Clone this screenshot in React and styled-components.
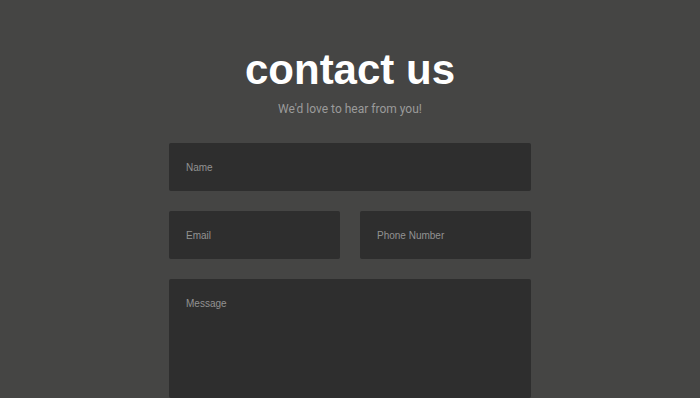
import React from "react";
import styled, { createGlobalStyle } from "styled-components";

const Global = createGlobalStyle`
  html, body { margin: 0; padding: 0; background: #454544; overflow: hidden; }
  * { box-sizing: border-box; }
`;

const Page = styled.main`
  height: 398px;
  display: flex;
  flex-direction: column;
  align-items: center;
  padding-top: 46px;
`;

const Title = styled.h1`
  margin: 0;
  font-family: "Liberation Sans", Arial, sans-serif;
  font-weight: 700;
  font-size: 42px;
  line-height: 48px;
  color: #ffffff;
`;

const Subtitle = styled.p`
  margin: 7px 0 0;
  font-family: Roboto, "Liberation Sans", sans-serif;
  font-size: 12px;
  line-height: 16px;
  color: #9b9b9b;
`;

const Form = styled.form`
  width: 362px;
  margin-top: 26px;
  display: flex;
  flex-direction: column;
  gap: 20px;
`;

const Row = styled.div`
  display: grid;
  grid-template-columns: 1fr 1fr;
  gap: 20px;
`;

const fieldStyles = `
  display: block;
  width: 100%;
  border: none;
  outline: none;
  border-radius: 2px;
  background: #2e2e2e;
  color: #dddddd;
  font-family: "Liberation Sans", Arial, sans-serif;
  font-size: 10px;
  padding: 0 17px;
  &::placeholder { color: #929292; opacity: 1; }
`;

const Field = styled.input`
  ${fieldStyles}
  height: 48px;
`;

const Message = styled.textarea`
  ${fieldStyles}
  height: 119px;
  padding-top: 19px;
  resize: none;
  line-height: 12px;
`;

export default function App() {
  return (
    <>
      <Global />
      <Page>
        <Title>contact us</Title>
        <Subtitle>We'd love to hear from you!</Subtitle>
        <Form onSubmit={(e) => e.preventDefault()}>
          <Field placeholder="Name" />
          <Row>
            <Field placeholder="Email" />
            <Field placeholder="Phone Number" />
          </Row>
          <Message placeholder="Message" />
        </Form>
      </Page>
    </>
  );
}
